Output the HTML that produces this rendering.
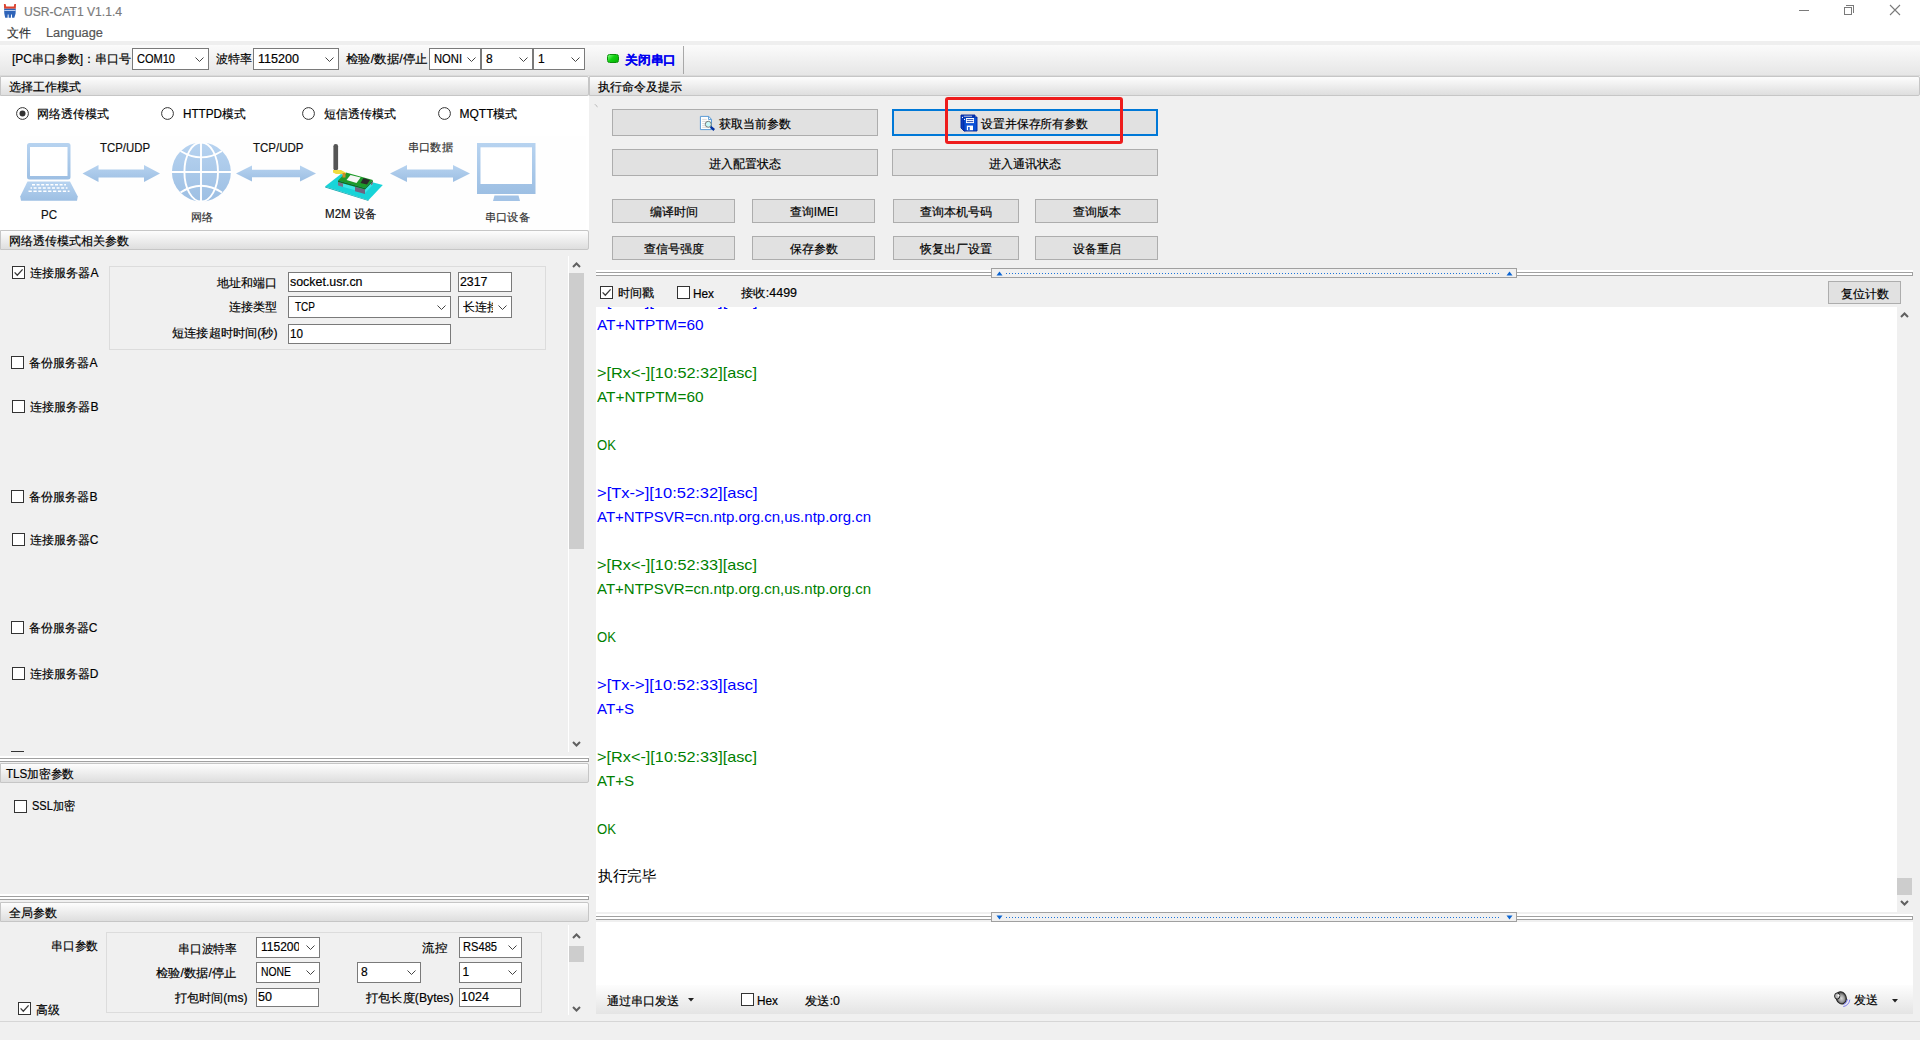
<!DOCTYPE html>
<html><head><meta charset="utf-8"><title>USR-CAT1</title><style>html,body{margin:0;padding:0}
body{width:1920px;height:1040px;overflow:hidden;position:relative;background:#f0f0f0;font-family:"Liberation Sans", sans-serif}
body>div,body>svg,body>span{position:absolute}
.t{position:absolute;white-space:nowrap;transform-origin:0 0;font-family:"Liberation Sans", sans-serif}
</style></head><body>
<div style="left:0px;top:0px;width:1920px;height:41px;background:#fff"></div>
<div style="left:0px;top:41px;width:1920px;height:4px;background:#efefef"></div>
<svg style="left:3px;top:3px" width="15" height="16" viewBox="3 3 15 16">
<path d="M3.9 3.9 L5.6 3.9 L6.2 6.5 L13.8 6.5 L14.3 3.9 L16 3.9 L15.8 8.7 L4.1 8.7 Z" fill="#dc4430"/>
<path d="M4.1 8.7 L15.8 8.7 L15.6 13.4 L14.3 17.7 L12.1 17.7 L11.9 14.5 L11 14.5 L10.9 17.7 L8.7 17.7 L8.6 14.5 L7.7 14.5 L7.6 17.7 L5.2 17.7 L4.3 13.4 Z" fill="#2d63b8"/>
<rect x="4.2" y="10" width="11.5" height="1" fill="#b9cdee"/>
</svg>
<span class="t" style="transform:scaleX(0.9683);left:23.5px;top:6.3px;font-size:12.5px;line-height:12.5px;color:#7a7a7a;-webkit-text-stroke:0.18px #7a7a7a;">USR-CAT1 V1.1.4</span>
<div style="left:1799px;top:10px;width:10px;height:1px;background:#7a7a7a"></div>
<div style="left:1844px;top:7px;width:8px;height:8px;border:1px solid #7a7a7a;box-sizing:border-box;background:#fff"></div>
<div style="left:1846px;top:5px;width:8px;height:8px;border-top:1px solid #7a7a7a;border-right:1px solid #7a7a7a;box-sizing:border-box"></div>
<svg style="left:1889px;top:4px" width="12" height="12" viewBox="0 0 12 12"><path d="M1 1 L11 11 M11 1 L1 11" stroke="#7a7a7a" stroke-width="1.1"/></svg>
<span class="t" style="transform:scaleX(1.0000);left:7px;top:27px;font-size:12px;line-height:12px;color:#333;-webkit-text-stroke:0.18px #333;">文件</span>
<span class="t" style="transform:scaleX(1.0676);left:45.5px;top:27px;font-size:12px;line-height:12px;color:#555;-webkit-text-stroke:0.18px #555;">Language</span>
<div style="left:0px;top:45px;width:1920px;height:30px;background:linear-gradient(#fbfbfb,#e6e6e6)"></div>
<div style="left:0px;top:75px;width:1920px;height:1px;background:#dadada"></div>
<span class="t" style="transform:scaleX(0.9971);left:12px;top:53px;font-size:12px;line-height:12px;color:#000;-webkit-text-stroke:0.18px #000;">[PC串口参数]：串口号</span>
<div style="left:132px;top:48px;width:77px;height:22px;background:#fff;border:1px solid #7a7a7a;box-sizing:border-box"></div>
<svg style="left:195px;top:57.0px" width="9" height="6" viewBox="0 0 9 6"><path d="M0.5 0.5 L4.5 4.5 L8.5 0.5" fill="none" stroke="#444" stroke-width="1"/></svg>
<span class="t" style="transform:scaleX(0.9191);left:137px;top:53px;font-size:12px;line-height:12px;color:#000;-webkit-text-stroke:0.18px #000;">COM10</span>
<span class="t" style="transform:scaleX(1.0000);left:216px;top:53px;font-size:12px;line-height:12px;color:#000;-webkit-text-stroke:0.18px #000;">波特率</span>
<div style="left:253px;top:48px;width:86px;height:22px;background:#fff;border:1px solid #7a7a7a;box-sizing:border-box"></div>
<svg style="left:325px;top:57.0px" width="9" height="6" viewBox="0 0 9 6"><path d="M0.5 0.5 L4.5 4.5 L8.5 0.5" fill="none" stroke="#444" stroke-width="1"/></svg>
<span class="t" style="transform:scaleX(1.0471);left:258px;top:53px;font-size:12px;line-height:12px;color:#000;-webkit-text-stroke:0.18px #000;">115200</span>
<span class="t" style="transform:scaleX(1.0359);left:346px;top:53px;font-size:12px;line-height:12px;color:#000;-webkit-text-stroke:0.18px #000;">检验/数据/停止</span>
<div style="left:429px;top:48px;width:52px;height:22px;background:#fff;border:1px solid #7a7a7a;box-sizing:border-box"></div>
<svg style="left:467px;top:57.0px" width="9" height="6" viewBox="0 0 9 6"><path d="M0.5 0.5 L4.5 4.5 L8.5 0.5" fill="none" stroke="#444" stroke-width="1"/></svg>
<span class="t" style="transform:scaleX(0.9333);left:434px;top:53px;font-size:12px;line-height:12px;color:#000;-webkit-text-stroke:0.18px #000;">NONI</span>
<div style="left:481px;top:48px;width:52px;height:22px;background:#fff;border:1px solid #7a7a7a;box-sizing:border-box"></div>
<svg style="left:519px;top:57.0px" width="9" height="6" viewBox="0 0 9 6"><path d="M0.5 0.5 L4.5 4.5 L8.5 0.5" fill="none" stroke="#444" stroke-width="1"/></svg>
<span class="t" style="left:486px;top:53px;font-size:12px;line-height:12px;color:#000;-webkit-text-stroke:0.18px #000;">8</span>
<div style="left:533px;top:48px;width:52px;height:22px;background:#fff;border:1px solid #7a7a7a;box-sizing:border-box"></div>
<svg style="left:571px;top:57.0px" width="9" height="6" viewBox="0 0 9 6"><path d="M0.5 0.5 L4.5 4.5 L8.5 0.5" fill="none" stroke="#444" stroke-width="1"/></svg>
<span class="t" style="left:538px;top:53px;font-size:12px;line-height:12px;color:#000;-webkit-text-stroke:0.18px #000;">1</span>
<div style="left:607px;top:54px;width:12px;height:9px;border-radius:2.5px;box-sizing:border-box;border:1px solid #0a8f0a;background:linear-gradient(135deg,#7dff7d,#10d010 45%,#05b005)"></div>
<span class="t" style="transform:scaleX(1.0625);left:625px;top:54px;font-size:12px;line-height:12px;color:#0000f0;font-weight:bold;-webkit-text-stroke:0.1px #0000f0">关闭串口</span>
<div style="left:683px;top:46px;width:1px;height:28px;background:#a8a8a8"></div>
<div style="left:0px;top:96px;width:589px;height:134px;background:#fff"></div>
<div style="left:0px;top:76px;width:589px;height:20px;background:linear-gradient(#fdfdfd,#dedede);border:1px solid #c6c6c6;box-sizing:border-box;border-radius:0 2px 2px 0"></div>
<span class="t" style="left:9px;top:80.5px;font-size:12px;line-height:12px;color:#000;-webkit-text-stroke:0.18px #000;">选择工作模式</span>
<div style="left:589px;top:76px;width:1331px;height:20px;background:linear-gradient(#fdfdfd,#dedede);border:1px solid #c6c6c6;box-sizing:border-box;border-radius:0 2px 2px 0"></div>
<span class="t" style="left:598px;top:80.5px;font-size:12px;line-height:12px;color:#000;-webkit-text-stroke:0.18px #000;">执行命令及提示</span>
<svg style="left:594px;top:103px" width="5" height="5" viewBox="0 0 5 5"><path d="M1 1.5 L1.5 1 M1.5 2 L3.5 3.8" stroke="#999" stroke-width="0.8"/></svg>
<svg style="left:16.0px;top:107.0px" width="13" height="13" viewBox="0 0 13 13"><circle cx="6.5" cy="6.5" r="5.9" fill="#fff" stroke="#333" stroke-width="1"/><circle cx="6.5" cy="6.5" r="3" fill="#333"/></svg>
<span class="t" style="left:37px;top:108px;font-size:12px;line-height:12px;color:#000;-webkit-text-stroke:0.18px #000;">网络透传模式</span>
<svg style="left:161.0px;top:107.0px" width="13" height="13" viewBox="0 0 13 13"><circle cx="6.5" cy="6.5" r="5.9" fill="#fff" stroke="#333" stroke-width="1"/></svg>
<span class="t" style="transform:scaleX(0.9766);left:183px;top:108px;font-size:12px;line-height:12px;color:#000;-webkit-text-stroke:0.18px #000;">HTTPD模式</span>
<svg style="left:302.0px;top:107.0px" width="13" height="13" viewBox="0 0 13 13"><circle cx="6.5" cy="6.5" r="5.9" fill="#fff" stroke="#333" stroke-width="1"/></svg>
<span class="t" style="left:323.5px;top:108px;font-size:12px;line-height:12px;color:#000;-webkit-text-stroke:0.18px #000;">短信透传模式</span>
<svg style="left:438.0px;top:107.0px" width="13" height="13" viewBox="0 0 13 13"><circle cx="6.5" cy="6.5" r="5.9" fill="#fff" stroke="#333" stroke-width="1"/></svg>
<span class="t" style="transform:scaleX(1.0000);left:459.5px;top:108px;font-size:12px;line-height:12px;color:#000;-webkit-text-stroke:0.18px #000;">MQTT模式</span>
<div style="left:20px;top:136px;width:566px;height:94px;background:#fefefe"></div>
<svg style="left:0;top:130px" width="589" height="100" viewBox="0 130 589 100">
<defs><linearGradient id="bg1" x1="0" y1="0" x2="0" y2="1"><stop offset="0" stop-color="#b7d3f0"/><stop offset="1" stop-color="#9dbfe3"/></linearGradient></defs>
<!-- laptop -->
<rect x="27" y="143" width="43.5" height="36.5" rx="2.5" fill="url(#bg1)"/>
<rect x="30" y="147" width="37.5" height="29" fill="#fff"/>
<path d="M27.5 181.5 L70 181.5 L77.8 196.5 L77 200.7 L21 200.7 L20.2 196.5 Z" fill="url(#bg1)"/>
<g stroke="#fff" stroke-width="1.5">
<path d="M32 184.8 L66 184.8" stroke-dasharray="3 1.6"/>
<path d="M30.5 188 L67.5 188" stroke-dasharray="3 1.6" stroke-dashoffset="1.5"/>
<path d="M28.5 191.3 L69.5 191.3" stroke-dasharray="3.3 1.6"/>
</g>
<!-- arrows -->
<path d="M82.5 173.5 L98.5 165 L98.5 169.5 L144 169.5 L144 165 L160 173.5 L144 182 L144 177.5 L98.5 177.5 L98.5 182 Z" fill="url(#bg1)"/>
<path d="M236 173.5 L252 165.5 L252 169.75 L300 169.75 L300 165.5 L316 173.5 L300 181.5 L300 177.25 L252 177.25 L252 181.5 Z" fill="url(#bg1)"/>
<path d="M390 173.5 L407 165 L407 169.5 L453 169.5 L453 165 L470 173.5 L453 182 L453 177.5 L407 177.5 L407 182 Z" fill="url(#bg1)"/>
<!-- globe -->
<circle cx="201.4" cy="172" r="29.5" fill="url(#bg1)"/>
<g stroke="#fff" stroke-width="1.9" fill="none">
<line x1="201" y1="142" x2="201" y2="202"/>
<line x1="171" y1="172" x2="232" y2="172"/>
<ellipse cx="201.2" cy="172" rx="16.8" ry="29.5"/>
<path d="M180.5 151 Q201.4 163.8 222 151"/>
<path d="M180.5 192.5 Q201.4 179 222 192.5"/>
</g>
<!-- monitor -->
<rect x="477" y="143" width="58.5" height="51" fill="url(#bg1)"/>
<rect x="480.5" y="147.3" width="51.5" height="36.7" fill="#fff"/>
<path d="M494.5 195.5 L518.5 195.5 L520 201 L493 201 Z" fill="#a3c3e6"/>
<!-- M2M device -->
<path d="M325 186.6 L341 174 L382.8 185 L368.4 200.3 Z" fill="#18d4d8"/>
<path d="M325 186.6 L368.4 200.3 L368.6 201 L325.2 187.4 Z" fill="#10a8b0"/>
<path d="M338 182 L365 189.5 L372.8 181.5 L372.8 185 L365 193 L338 185.5 Z" fill="#3ee6e6"/>
<path d="M338 182 L343 183.4 L343 187 L338 185.6 Z" fill="#7a7088"/>
<path d="M355 186.8 L365 189.5 L365 194 L355 191.3 Z" fill="#6e6480"/>
<path d="M371 183 L372.8 181.5 L372.8 184 L371 185.5 Z" fill="#7a7088"/>
<path d="M338 180.6 L346 172.5 L372.8 180 L365 188 Z" fill="#1e9a2a"/>
<path d="M338 180.6 L365 188 L365 189.5 L338 182 Z" fill="#146b1d"/>
<path d="M365 188 L372.8 180 L372.8 181.5 L365 189.5 Z" fill="#146b1d"/>
<path d="M346.5 180 L350.5 175 L360.6 177.5 L356.5 183 Z" fill="#f6f6f6"/>
<path d="M360.5 183 L363.5 178 L370 180 L367 184.5 Z" fill="#2a2a2a"/>
<rect x="333.4" y="144" width="4.7" height="26.5" rx="2.3" fill="#555"/>
<path d="M333 170 L341 170 L345.6 172.5 L345.6 174 L336 174 L333 172.5 Z" fill="#f0dc40"/>
<rect x="342.5" y="173" width="3" height="4.5" fill="#d08a2a"/>
</svg>
<span class="t" style="transform:scaleX(0.9597);left:41px;top:208.5px;font-size:12px;line-height:12px;color:#111;-webkit-text-stroke:0.18px #111;">PC</span>
<span class="t" style="transform:scaleX(0.9493);left:100px;top:141.5px;font-size:12px;line-height:12px;color:#111;-webkit-text-stroke:0.18px #111;">TCP/UDP</span>
<span class="t" style="transform:scaleX(0.9588);left:252.5px;top:141.5px;font-size:12px;line-height:12px;color:#111;-webkit-text-stroke:0.18px #111;">TCP/UDP</span>
<span class="t" style="transform:scaleX(1.0227);left:408px;top:142px;font-size:11px;line-height:11px;color:#333;-webkit-text-stroke:0.18px #333;">串口数据</span>
<span class="t" style="transform:scaleX(1.0000);left:190.5px;top:211.5px;font-size:11px;line-height:11px;color:#333;-webkit-text-stroke:0.18px #333;">网络</span>
<span class="t" style="transform:scaleX(0.9630);left:325px;top:208px;font-size:12px;line-height:12px;color:#111;-webkit-text-stroke:0.18px #111;">M2M 设备</span>
<span class="t" style="transform:scaleX(1.0227);left:484.5px;top:211.5px;font-size:11px;line-height:11px;color:#333;-webkit-text-stroke:0.18px #333;">串口设备</span>
<div style="left:0px;top:250px;width:589px;height:506px;background:#f0f0f0"></div>
<div style="left:0px;top:230px;width:589px;height:20px;background:linear-gradient(#fdfdfd,#dedede);border:1px solid #c6c6c6;box-sizing:border-box;border-radius:0 2px 2px 0"></div>
<span class="t" style="left:8.5px;top:234.5px;font-size:12px;line-height:12px;color:#000;-webkit-text-stroke:0.18px #000;">网络透传模式相关参数</span>
<svg style="left:12px;top:266px" width="13" height="13" viewBox="0 0 13 13"><rect x="0.5" y="0.5" width="12" height="12" fill="#fff" stroke="#333" stroke-width="1"/><path d="M2.6 6.4 L5.3 9.2 L10.6 3.4" fill="none" stroke="#3a3a3a" stroke-width="1.3"/></svg>
<span class="t" style="transform:scaleX(1.0071);left:29.5px;top:267px;font-size:12px;line-height:12px;color:#000;-webkit-text-stroke:0.18px #000;">连接服务器A</span>
<div style="left:109px;top:266px;width:437px;height:84px;border:1px solid #dcdcdc;box-sizing:border-box"></div>
<span class="t" style="transform:scaleX(1.0000);left:216.5px;top:277px;font-size:12px;line-height:12px;color:#000;-webkit-text-stroke:0.18px #000;">地址和端口</span>
<span class="t" style="transform:scaleX(1.0000);left:229px;top:301px;font-size:12px;line-height:12px;color:#000;-webkit-text-stroke:0.18px #000;">连接类型</span>
<span class="t" style="transform:scaleX(1.0144);left:172px;top:327px;font-size:12px;line-height:12px;color:#000;-webkit-text-stroke:0.18px #000;">短连接超时时间(秒)</span>
<div style="left:288px;top:272px;width:163px;height:20px;background:#fff;border:1px solid #7a7a7a;box-sizing:border-box"></div>
<span class="t" style="transform:scaleX(1.0353);left:290px;top:275.5px;font-size:12px;line-height:12px;color:#000;-webkit-text-stroke:0.18px #000;">socket.usr.cn</span>
<div style="left:458px;top:272px;width:54px;height:20px;background:#fff;border:1px solid #7a7a7a;box-sizing:border-box"></div>
<span class="t" style="transform:scaleX(1.0298);left:460px;top:275.5px;font-size:12px;line-height:12px;color:#000;-webkit-text-stroke:0.18px #000;">2317</span>
<div style="left:288px;top:296px;width:163px;height:22px;background:#fff;border:1px solid #7a7a7a;box-sizing:border-box"></div>
<svg style="left:437px;top:305.0px" width="9" height="6" viewBox="0 0 9 6"><path d="M0.5 0.5 L4.5 4.5 L8.5 0.5" fill="none" stroke="#444" stroke-width="1"/></svg>
<span class="t" style="transform:scaleX(0.8333);left:294.5px;top:301px;font-size:12px;line-height:12px;color:#000;-webkit-text-stroke:0.18px #000;">TCP</span>
<div style="left:458px;top:296px;width:54px;height:22px;background:#fff;border:1px solid #7a7a7a;box-sizing:border-box"></div>
<svg style="left:498px;top:305.0px" width="9" height="6" viewBox="0 0 9 6"><path d="M0.5 0.5 L4.5 4.5 L8.5 0.5" fill="none" stroke="#444" stroke-width="1"/></svg>
<span class="t" style="left:463px;top:301px;font-size:12px;line-height:12px;color:#000;-webkit-text-stroke:0.18px #000;width:29.5px;overflow:hidden">长连接</span>
<div style="left:288px;top:324px;width:163px;height:20px;background:#fff;border:1px solid #7a7a7a;box-sizing:border-box"></div>
<span class="t" style="transform:scaleX(0.9731);left:290px;top:327.5px;font-size:12px;line-height:12px;color:#000;-webkit-text-stroke:0.18px #000;">10</span>
<svg style="left:11px;top:356px" width="13" height="13" viewBox="0 0 13 13"><rect x="0.5" y="0.5" width="12" height="12" fill="#fff" stroke="#333" stroke-width="1"/></svg>
<span class="t" style="transform:scaleX(1.0071);left:28.5px;top:357px;font-size:12px;line-height:12px;color:#000;-webkit-text-stroke:0.18px #000;">备份服务器A</span>
<svg style="left:12px;top:400px" width="13" height="13" viewBox="0 0 13 13"><rect x="0.5" y="0.5" width="12" height="12" fill="#fff" stroke="#333" stroke-width="1"/></svg>
<span class="t" style="transform:scaleX(1.0071);left:29.5px;top:401px;font-size:12px;line-height:12px;color:#000;-webkit-text-stroke:0.18px #000;">连接服务器B</span>
<svg style="left:11px;top:490px" width="13" height="13" viewBox="0 0 13 13"><rect x="0.5" y="0.5" width="12" height="12" fill="#fff" stroke="#333" stroke-width="1"/></svg>
<span class="t" style="transform:scaleX(1.0071);left:28.5px;top:491px;font-size:12px;line-height:12px;color:#000;-webkit-text-stroke:0.18px #000;">备份服务器B</span>
<svg style="left:12px;top:533px" width="13" height="13" viewBox="0 0 13 13"><rect x="0.5" y="0.5" width="12" height="12" fill="#fff" stroke="#333" stroke-width="1"/></svg>
<span class="t" style="transform:scaleX(0.9975);left:29.5px;top:534px;font-size:12px;line-height:12px;color:#000;-webkit-text-stroke:0.18px #000;">连接服务器C</span>
<svg style="left:11px;top:621px" width="13" height="13" viewBox="0 0 13 13"><rect x="0.5" y="0.5" width="12" height="12" fill="#fff" stroke="#333" stroke-width="1"/></svg>
<span class="t" style="transform:scaleX(0.9975);left:28.5px;top:622px;font-size:12px;line-height:12px;color:#000;-webkit-text-stroke:0.18px #000;">备份服务器C</span>
<svg style="left:12px;top:666.5px" width="13" height="13" viewBox="0 0 13 13"><rect x="0.5" y="0.5" width="12" height="12" fill="#fff" stroke="#333" stroke-width="1"/></svg>
<span class="t" style="transform:scaleX(0.9975);left:29.5px;top:667.5px;font-size:12px;line-height:12px;color:#000;-webkit-text-stroke:0.18px #000;">连接服务器D</span>
<div style="left:11px;top:751px;width:13px;height:1px;background:#333"></div>
<div style="left:568px;top:256px;width:1px;height:496px;background:#fff"></div>
<svg style="left:572px;top:261px" width="9" height="8" viewBox="0 0 9 8"><path d="M1 6 L4.5 2.5 L8 6" fill="none" stroke="#606060" stroke-width="2"/></svg>
<div style="left:569px;top:273px;width:15px;height:276px;background:#cdcdcd"></div>
<svg style="left:572px;top:740px" width="9" height="8" viewBox="0 0 9 8"><path d="M1 2 L4.5 5.5 L8 2" fill="none" stroke="#606060" stroke-width="2"/></svg>
<div style="left:0px;top:756px;width:589px;height:2px;background:#fff"></div>
<div style="left:0px;top:758px;width:589px;height:1px;background:#a0a0a0"></div>
<div style="left:0px;top:759px;width:589px;height:2px;background:#fff"></div>
<div style="left:0px;top:761px;width:589px;height:1px;background:#a0a0a0"></div>
<div style="left:588px;top:758px;width:1px;height:4px;background:#a0a0a0"></div>
<div style="left:0px;top:783px;width:589px;height:112px;background:#f0f0f0"></div>
<div style="left:0px;top:763px;width:589px;height:20px;background:linear-gradient(#fdfdfd,#dedede);border:1px solid #c6c6c6;box-sizing:border-box;border-radius:0 2px 2px 0"></div>
<span class="t" style="transform:scaleX(0.9712);left:5.6px;top:767.5px;font-size:12px;line-height:12px;color:#000;-webkit-text-stroke:0.18px #000;">TLS加密参数</span>
<svg style="left:14px;top:799.5px" width="13" height="13" viewBox="0 0 13 13"><rect x="0.5" y="0.5" width="12" height="12" fill="#fff" stroke="#333" stroke-width="1"/></svg>
<span class="t" style="transform:scaleX(0.9210);left:32px;top:800px;font-size:12px;line-height:12px;color:#000;-webkit-text-stroke:0.18px #000;">SSL加密</span>
<div style="left:0px;top:894px;width:589px;height:2px;background:#fff"></div>
<div style="left:0px;top:896px;width:589px;height:1px;background:#a0a0a0"></div>
<div style="left:0px;top:897px;width:589px;height:2px;background:#fff"></div>
<div style="left:0px;top:899px;width:589px;height:1px;background:#a0a0a0"></div>
<div style="left:588px;top:896px;width:1px;height:4px;background:#a0a0a0"></div>
<div style="left:0px;top:902px;width:589px;height:20px;background:linear-gradient(#fdfdfd,#dedede);border:1px solid #c6c6c6;box-sizing:border-box;border-radius:0 2px 2px 0"></div>
<span class="t" style="left:8.5px;top:906.5px;font-size:12px;line-height:12px;color:#000;-webkit-text-stroke:0.18px #000;">全局参数</span>
<span class="t" style="transform:scaleX(0.9792);left:51px;top:940px;font-size:12px;line-height:12px;color:#000;-webkit-text-stroke:0.18px #000;">串口参数</span>
<svg style="left:18px;top:1002px" width="13" height="13" viewBox="0 0 13 13"><rect x="0.5" y="0.5" width="12" height="12" fill="#fff" stroke="#333" stroke-width="1"/><path d="M2.6 6.4 L5.3 9.2 L10.6 3.4" fill="none" stroke="#3a3a3a" stroke-width="1.3"/></svg>
<span class="t" style="transform:scaleX(0.9792);left:35.5px;top:1003.5px;font-size:12px;line-height:12px;color:#000;-webkit-text-stroke:0.18px #000;">高级</span>
<div style="left:105.5px;top:932px;width:436.5px;height:80.5px;border:1px solid #dcdcdc;box-sizing:border-box"></div>
<span class="t" style="transform:scaleX(0.9833);left:178px;top:943px;font-size:12px;line-height:12px;color:#000;-webkit-text-stroke:0.18px #000;">串口波特率</span>
<span class="t" style="transform:scaleX(1.0232);left:156px;top:967px;font-size:12px;line-height:12px;color:#000;-webkit-text-stroke:0.18px #000;">检验/数据/停止</span>
<span class="t" style="transform:scaleX(1.0069);left:175px;top:992px;font-size:12px;line-height:12px;color:#000;-webkit-text-stroke:0.18px #000;">打包时间(ms)</span>
<div style="left:256px;top:936.5px;width:63.5px;height:21px;background:#fff;border:1px solid #7a7a7a;box-sizing:border-box"></div>
<svg style="left:305.5px;top:945.0px" width="9" height="6" viewBox="0 0 9 6"><path d="M0.5 0.5 L4.5 4.5 L8.5 0.5" fill="none" stroke="#444" stroke-width="1"/></svg>
<span class="t" style="transform:scaleX(1.0000);left:261px;top:941px;font-size:12px;line-height:12px;color:#000;-webkit-text-stroke:0.18px #000;width:38px;overflow:hidden">115200</span>
<div style="left:256px;top:961.5px;width:63.5px;height:21px;background:#fff;border:1px solid #7a7a7a;box-sizing:border-box"></div>
<svg style="left:305.5px;top:970.0px" width="9" height="6" viewBox="0 0 9 6"><path d="M0.5 0.5 L4.5 4.5 L8.5 0.5" fill="none" stroke="#444" stroke-width="1"/></svg>
<span class="t" style="transform:scaleX(0.8653);left:261px;top:966px;font-size:12px;line-height:12px;color:#000;-webkit-text-stroke:0.18px #000;">NONE</span>
<div style="left:256px;top:987.5px;width:63px;height:19px;background:#fff;border:1px solid #7a7a7a;box-sizing:border-box"></div>
<span class="t" style="transform:scaleX(1.0480);left:258px;top:991px;font-size:12px;line-height:12px;color:#000;-webkit-text-stroke:0.18px #000;">50</span>
<span class="t" style="transform:scaleX(1.0417);left:422px;top:942px;font-size:12px;line-height:12px;color:#000;-webkit-text-stroke:0.18px #000;">流控</span>
<div style="left:458.5px;top:936.5px;width:63px;height:21px;background:#fff;border:1px solid #7a7a7a;box-sizing:border-box"></div>
<svg style="left:507.5px;top:945.0px" width="9" height="6" viewBox="0 0 9 6"><path d="M0.5 0.5 L4.5 4.5 L8.5 0.5" fill="none" stroke="#444" stroke-width="1"/></svg>
<span class="t" style="transform:scaleX(0.9264);left:462.5px;top:941px;font-size:12px;line-height:12px;color:#000;-webkit-text-stroke:0.18px #000;">RS485</span>
<div style="left:357px;top:961.5px;width:63.5px;height:21px;background:#fff;border:1px solid #7a7a7a;box-sizing:border-box"></div>
<svg style="left:406.5px;top:970.0px" width="9" height="6" viewBox="0 0 9 6"><path d="M0.5 0.5 L4.5 4.5 L8.5 0.5" fill="none" stroke="#444" stroke-width="1"/></svg>
<span class="t" style="left:361px;top:966px;font-size:12px;line-height:12px;color:#000;-webkit-text-stroke:0.18px #000;">8</span>
<div style="left:458.5px;top:961.5px;width:63px;height:21px;background:#fff;border:1px solid #7a7a7a;box-sizing:border-box"></div>
<svg style="left:507.5px;top:970.0px" width="9" height="6" viewBox="0 0 9 6"><path d="M0.5 0.5 L4.5 4.5 L8.5 0.5" fill="none" stroke="#444" stroke-width="1"/></svg>
<span class="t" style="left:462.5px;top:966px;font-size:12px;line-height:12px;color:#000;-webkit-text-stroke:0.18px #000;">1</span>
<span class="t" style="transform:scaleX(1.0173);left:365.5px;top:991.5px;font-size:12px;line-height:12px;color:#000;-webkit-text-stroke:0.18px #000;">打包长度(Bytes)</span>
<div style="left:458.5px;top:987.5px;width:62px;height:19px;background:#fff;border:1px solid #7a7a7a;box-sizing:border-box"></div>
<span class="t" style="transform:scaleX(1.0486);left:461px;top:991px;font-size:12px;line-height:12px;color:#000;-webkit-text-stroke:0.18px #000;">1024</span>
<svg style="left:572px;top:932px" width="9" height="8" viewBox="0 0 9 8"><path d="M1 6 L4.5 2.5 L8 6" fill="none" stroke="#606060" stroke-width="2"/></svg>
<div style="left:569px;top:945.5px;width:15px;height:16.5px;background:#cdcdcd"></div>
<svg style="left:572px;top:1005px" width="9" height="8" viewBox="0 0 9 8"><path d="M1 2 L4.5 5.5 L8 2" fill="none" stroke="#606060" stroke-width="2"/></svg>
<div style="left:568px;top:925px;width:1px;height:90px;background:#fff"></div>
<div style="left:0px;top:1021px;width:1920px;height:1px;background:#d6d6d6"></div>
<div style="left:612px;top:109px;width:266px;height:27px;background:#e1e1e1;border:1px solid #adadad;box-sizing:border-box"></div>
<span class="t" style="transform:scaleX(1.0000);left:718.5px;top:117.5px;font-size:12px;line-height:12px;color:#000;-webkit-text-stroke:0.18px #000;">获取当前参数</span>
<svg style="left:698px;top:114px" width="18" height="18" viewBox="698 114 18 18">
<path d="M700.4 116.4 L708.8 116.4 L711.5 119.4 L711.5 129.6 L700.4 129.6 Z" fill="#fff" stroke="#5b9bd5" stroke-width="1"/>
<path d="M708.6 116.4 L708.6 119.6 L711.5 119.6" fill="none" stroke="#5b9bd5" stroke-width="1"/>
<path d="M702.2 119.4 H706.8 M702.2 121.4 H706.8 M702.2 123.5 H705 M702.2 125.4 H705 M702.2 127.3 H706.8" stroke="#d0d0d0" stroke-width="0.8"/>
<circle cx="708.3" cy="124.3" r="3" fill="#c8f8f8" stroke="#6a6a6a" stroke-width="0.9"/>
<path d="M710.6 126.8 L714.2 130" stroke="#0030a0" stroke-width="2.4"/>
</svg>
<div style="left:892px;top:109px;width:266px;height:27px;background:#e1e1e1;border:2px solid #0078d7;box-sizing:border-box"></div>
<svg style="left:960px;top:114px" width="18" height="18" viewBox="960 114 18 18">
<path d="M961 115 L975 115 L975 128 L964 131 L961 128 Z" fill="#0a3cbf" stroke="#00259a" stroke-width="0.9"/>
<rect x="963.9" y="115.8" width="8.1" height="1.2" fill="#fff"/>
<path d="M963.7 117 L977 117 L977 131 L964 131 Z" fill="#0a50d6" stroke="#00259a" stroke-width="0.9"/>
<rect x="966" y="118" width="8" height="5.1" fill="#fff"/>
<path d="M966.8 119.6 H973.3 M966.8 121.6 H973.3" stroke="#00259a" stroke-width="0.8"/>
<rect x="966.8" y="125.6" width="6.2" height="4.6" fill="#fff"/>
<rect x="968.1" y="127" width="1.6" height="3.2" fill="#0a50d6"/>
<circle cx="962.5" cy="117.4" r="0.6" fill="#fff"/><circle cx="964.5" cy="119.4" r="0.6" fill="#fff"/>
</svg>
<span class="t" style="transform:scaleX(0.9907);left:981px;top:117.5px;font-size:12px;line-height:12px;color:#000;-webkit-text-stroke:0.18px #000;">设置并保存所有参数</span>
<div style="left:612px;top:149px;width:266px;height:27px;background:#e1e1e1;border:1px solid #adadad;box-sizing:border-box"></div>
<span class="t" style="transform:scaleX(1.0000);left:709.0px;top:157.5px;font-size:12px;line-height:12px;color:#000;-webkit-text-stroke:0.18px #000;">进入配置状态</span>
<div style="left:892px;top:149px;width:266px;height:27px;background:#e1e1e1;border:1px solid #adadad;box-sizing:border-box"></div>
<span class="t" style="transform:scaleX(1.0000);left:989.0px;top:157.5px;font-size:12px;line-height:12px;color:#000;-webkit-text-stroke:0.18px #000;">进入通讯状态</span>
<div style="left:612px;top:199px;width:123px;height:24px;background:#e1e1e1;border:1px solid #adadad;box-sizing:border-box"></div>
<span class="t" style="transform:scaleX(1.0000);left:649.5px;top:206.0px;font-size:12px;line-height:12px;color:#000;-webkit-text-stroke:0.18px #000;">编译时间</span>
<div style="left:752px;top:199px;width:123px;height:24px;background:#e1e1e1;border:1px solid #adadad;box-sizing:border-box"></div>
<span class="t" style="transform:scaleX(0.9862);left:789.5px;top:206.0px;font-size:12px;line-height:12px;color:#000;-webkit-text-stroke:0.18px #000;">查询IMEI</span>
<div style="left:893px;top:199px;width:126px;height:24px;background:#e1e1e1;border:1px solid #adadad;box-sizing:border-box"></div>
<span class="t" style="transform:scaleX(1.0000);left:920.0px;top:206.0px;font-size:12px;line-height:12px;color:#000;-webkit-text-stroke:0.18px #000;">查询本机号码</span>
<div style="left:1035px;top:199px;width:123px;height:24px;background:#e1e1e1;border:1px solid #adadad;box-sizing:border-box"></div>
<span class="t" style="transform:scaleX(1.0000);left:1072.5px;top:206.0px;font-size:12px;line-height:12px;color:#000;-webkit-text-stroke:0.18px #000;">查询版本</span>
<div style="left:612px;top:236px;width:123px;height:24px;background:#e1e1e1;border:1px solid #adadad;box-sizing:border-box"></div>
<span class="t" style="transform:scaleX(1.0000);left:643.5px;top:243.0px;font-size:12px;line-height:12px;color:#000;-webkit-text-stroke:0.18px #000;">查信号强度</span>
<div style="left:752px;top:236px;width:123px;height:24px;background:#e1e1e1;border:1px solid #adadad;box-sizing:border-box"></div>
<span class="t" style="transform:scaleX(1.0000);left:789.5px;top:243.0px;font-size:12px;line-height:12px;color:#000;-webkit-text-stroke:0.18px #000;">保存参数</span>
<div style="left:893px;top:236px;width:126px;height:24px;background:#e1e1e1;border:1px solid #adadad;box-sizing:border-box"></div>
<span class="t" style="transform:scaleX(1.0000);left:920.0px;top:243.0px;font-size:12px;line-height:12px;color:#000;-webkit-text-stroke:0.18px #000;">恢复出厂设置</span>
<div style="left:1035px;top:236px;width:123px;height:24px;background:#e1e1e1;border:1px solid #adadad;box-sizing:border-box"></div>
<span class="t" style="transform:scaleX(1.0000);left:1072.5px;top:243.0px;font-size:12px;line-height:12px;color:#000;-webkit-text-stroke:0.18px #000;">设备重启</span>
<div style="left:945px;top:96.5px;width:178px;height:47px;border:3px solid #ee1c1c;box-sizing:border-box;border-radius:3px"></div>
<div style="left:596px;top:270px;width:1317px;height:2px;background:#fff"></div>
<div style="left:596px;top:272px;width:1317px;height:1px;background:#a0a0a0"></div>
<div style="left:596px;top:273px;width:1317px;height:2px;background:#fff"></div>
<div style="left:596px;top:275px;width:1317px;height:1px;background:#a0a0a0"></div>
<div style="left:1912px;top:272px;width:1px;height:4px;background:#a0a0a0"></div>
<div style="left:991px;top:268px;width:526px;height:10px;background:#f0f0f0;border:1px solid #a0a0a0;box-sizing:border-box"></div>
<svg style="left:996px;top:271px" width="7" height="5" viewBox="0 0 7 5"><path d="M0.5 4.5 L3.5 0.5 L6.5 4.5 Z" fill="#0a64d2"/></svg>
<svg style="left:1506px;top:271px" width="7" height="5" viewBox="0 0 7 5"><path d="M0.5 4.5 L3.5 0.5 L6.5 4.5 Z" fill="#0a64d2"/></svg>
<div style="left:1006px;top:273px;width:495px;height:1px;background:repeating-linear-gradient(90deg,#1a73d9 0 1px,transparent 1px 3px)"></div>
<div style="left:596px;top:307px;width:1301px;height:605px;background:#fff"></div>
<svg style="left:1900px;top:311px" width="9" height="8" viewBox="0 0 9 8"><path d="M1 6 L4.5 2.5 L8 6" fill="none" stroke="#606060" stroke-width="2"/></svg>
<div style="left:1897px;top:878px;width:15px;height:17px;background:#cdcdcd"></div>
<svg style="left:1900px;top:899px" width="9" height="8" viewBox="0 0 9 8"><path d="M1 2 L4.5 5.5 L8 2" fill="none" stroke="#606060" stroke-width="2"/></svg>
<span class="t" style="transform:scaleX(1.0999);left:596.8px;top:293.0px;font-size:15px;line-height:15px;color:#0000ff;">&gt;[Tx-&gt;][10:52:32][asc]</span>
<div style="left:596px;top:278px;width:1301px;height:29px;background:#f0f0f0"></div>
<svg style="left:600px;top:286px" width="13" height="13" viewBox="0 0 13 13"><rect x="0.5" y="0.5" width="12" height="12" fill="#fff" stroke="#333" stroke-width="1"/><path d="M2.6 6.4 L5.3 9.2 L10.6 3.4" fill="none" stroke="#3a3a3a" stroke-width="1.3"/></svg>
<span class="t" style="transform:scaleX(1.0000);left:617.5px;top:287px;font-size:12px;line-height:12px;color:#000;-webkit-text-stroke:0.18px #000;">时间戳</span>
<svg style="left:677px;top:286px" width="13" height="13" viewBox="0 0 13 13"><rect x="0.5" y="0.5" width="12" height="12" fill="#fff" stroke="#333" stroke-width="1"/></svg>
<span class="t" style="transform:scaleX(0.9839);left:693px;top:287.5px;font-size:12px;line-height:12px;color:#000;-webkit-text-stroke:0.18px #000;">Hex</span>
<span class="t" style="transform:scaleX(1.0364);left:741px;top:287px;font-size:12px;line-height:12px;color:#000;-webkit-text-stroke:0.18px #000;">接收:4499</span>
<div style="left:1828px;top:281px;width:73px;height:23px;background:#e1e1e1;border:1px solid #adadad;box-sizing:border-box"></div>
<span class="t" style="transform:scaleX(1.0000);left:1840.5px;top:287.5px;font-size:12px;line-height:12px;color:#000;-webkit-text-stroke:0.18px #000;">复位计数</span>
<span class="t" style="transform:scaleX(1.0248);left:596.8px;top:317.0px;font-size:15px;line-height:15px;color:#0000ff;">AT+NTPTM=60</span>
<span class="t" style="transform:scaleX(1.0841);left:596.8px;top:364.5px;font-size:15px;line-height:15px;color:#008000;">&gt;[Rx&lt;-][10:52:32][asc]</span>
<span class="t" style="transform:scaleX(1.0248);left:596.8px;top:388.5px;font-size:15px;line-height:15px;color:#008000;">AT+NTPTM=60</span>
<span class="t" style="transform:scaleX(0.8761);left:596.8px;top:436.5px;font-size:15px;line-height:15px;color:#008000;">OK</span>
<span class="t" style="transform:scaleX(1.0999);left:596.8px;top:484.5px;font-size:15px;line-height:15px;color:#0000ff;">&gt;[Tx-&gt;][10:52:32][asc]</span>
<span class="t" style="transform:scaleX(0.9999);left:596.8px;top:508.5px;font-size:15px;line-height:15px;color:#0000ff;">AT+NTPSVR=cn.ntp.org.cn,us.ntp.org.cn</span>
<span class="t" style="transform:scaleX(1.0841);left:596.8px;top:556.5px;font-size:15px;line-height:15px;color:#008000;">&gt;[Rx&lt;-][10:52:33][asc]</span>
<span class="t" style="transform:scaleX(0.9999);left:596.8px;top:580.5px;font-size:15px;line-height:15px;color:#008000;">AT+NTPSVR=cn.ntp.org.cn,us.ntp.org.cn</span>
<span class="t" style="transform:scaleX(0.8761);left:596.8px;top:628.5px;font-size:15px;line-height:15px;color:#008000;">OK</span>
<span class="t" style="transform:scaleX(1.0999);left:596.8px;top:676.5px;font-size:15px;line-height:15px;color:#0000ff;">&gt;[Tx-&gt;][10:52:33][asc]</span>
<span class="t" style="transform:scaleX(1.0047);left:596.8px;top:700.5px;font-size:15px;line-height:15px;color:#0000ff;">AT+S</span>
<span class="t" style="transform:scaleX(1.0841);left:596.8px;top:748.5px;font-size:15px;line-height:15px;color:#008000;">&gt;[Rx&lt;-][10:52:33][asc]</span>
<span class="t" style="transform:scaleX(1.0047);left:596.8px;top:772.5px;font-size:15px;line-height:15px;color:#008000;">AT+S</span>
<span class="t" style="transform:scaleX(0.8761);left:596.8px;top:820.5px;font-size:15px;line-height:15px;color:#008000;">OK</span>
<span class="t" style="transform:scaleX(0.9750);left:598px;top:868px;font-size:15px;line-height:15px;color:#000;">执行完毕</span>
<div style="left:596px;top:914px;width:1317px;height:2px;background:#fff"></div>
<div style="left:596px;top:916px;width:1317px;height:1px;background:#a0a0a0"></div>
<div style="left:596px;top:917px;width:1317px;height:2px;background:#fff"></div>
<div style="left:596px;top:919px;width:1317px;height:1px;background:#a0a0a0"></div>
<div style="left:1912px;top:916px;width:1px;height:4px;background:#a0a0a0"></div>
<div style="left:991px;top:912px;width:526px;height:10px;background:#f0f0f0;border:1px solid #a0a0a0;box-sizing:border-box"></div>
<svg style="left:996px;top:915px" width="7" height="5" viewBox="0 0 7 5"><path d="M0.5 0.5 L3.5 4.5 L6.5 0.5 Z" fill="#0a64d2"/></svg>
<svg style="left:1506px;top:915px" width="7" height="5" viewBox="0 0 7 5"><path d="M0.5 0.5 L3.5 4.5 L6.5 0.5 Z" fill="#0a64d2"/></svg>
<div style="left:1006px;top:917px;width:495px;height:1px;background:repeating-linear-gradient(90deg,#1a73d9 0 1px,transparent 1px 3px)"></div>
<div style="left:596px;top:922px;width:1317px;height:63px;background:#fff"></div>
<div style="left:596px;top:985px;width:1317px;height:29px;background:linear-gradient(#fdfdfd,#e4e4e4)"></div>
<span class="t" style="transform:scaleX(1.0069);left:607px;top:994.5px;font-size:12px;line-height:12px;color:#000;-webkit-text-stroke:0.18px #000;">通过串口发送</span>
<svg style="left:688px;top:998px" width="6" height="4" viewBox="0 0 6 4"><path d="M0 0 L6 0 L3 3.5 Z" fill="#222"/></svg>
<svg style="left:741px;top:993px" width="13" height="13" viewBox="0 0 13 13"><rect x="0.5" y="0.5" width="12" height="12" fill="#fff" stroke="#333" stroke-width="1"/></svg>
<span class="t" style="transform:scaleX(0.9839);left:757px;top:994.5px;font-size:12px;line-height:12px;color:#000;-webkit-text-stroke:0.18px #000;">Hex</span>
<span class="t" style="transform:scaleX(1.0289);left:804.5px;top:994.5px;font-size:12px;line-height:12px;color:#000;-webkit-text-stroke:0.18px #000;">发送:0</span>
<svg style="left:1830px;top:988px" width="22" height="22" viewBox="1830 988 22 22">
<defs><radialGradient id="spk" cx="0.5" cy="0.55" r="0.55"><stop offset="0" stop-color="#d8d8d8"/><stop offset="0.5" stop-color="#a0a0a0"/><stop offset="1" stop-color="#3a3a3a"/></radialGradient></defs>
<ellipse cx="1841.2" cy="997.8" rx="5" ry="6.2" fill="url(#spk)" stroke="#2a2a2a" stroke-width="1.1" transform="rotate(-20 1841.2 997.8)"/>
<ellipse cx="1837.2" cy="996" rx="2.6" ry="3.1" fill="#bdbdbd" stroke="#222" stroke-width="1"/>
<circle cx="1838.6" cy="995.6" r="1.1" fill="#fff"/>
<path d="M1843.5 1004.6 Q1846.8 1003.2 1847.6 999.3" stroke="#7b7bf0" stroke-width="1" fill="none"/>
<path d="M1843.3 1006.6 Q1849 1005.2 1849.8 999.7" stroke="#7b7bf0" stroke-width="1" fill="none"/>
</svg>
<span class="t" style="transform:scaleX(1.0000);left:1853.5px;top:994px;font-size:12px;line-height:12px;color:#000;-webkit-text-stroke:0.18px #000;">发送</span>
<svg style="left:1892px;top:998.5px" width="6" height="4" viewBox="0 0 6 4"><path d="M0 0 L6 0 L3 3.5 Z" fill="#222"/></svg>
</body></html>
